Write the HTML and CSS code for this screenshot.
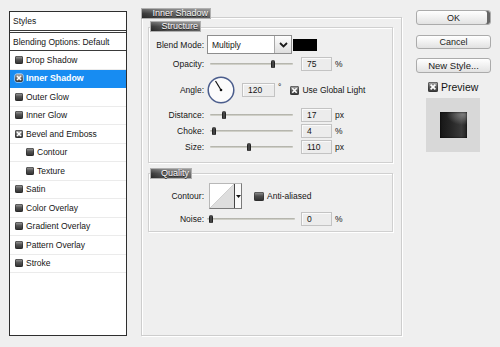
FILE: index.html
```html
<!DOCTYPE html>
<html>
<head>
<meta charset="utf-8">
<title>Layer Style</title>
<link rel="stylesheet" href="styles.css">
</head>
<body>
<div class="dialog">
  <div class="styles-panel">
    <div class="sp-head">Styles</div>
    <div class="sp-blend">Blending Options: Default</div>
    <ul class="sp-list">
      <li><span class="ico"></span>Drop Shadow</li>
      <li class="sel"><span class="ico on"><svg width="8" height="8" viewBox="0 0 8 8"><path d="M2 2 L6 6 M6 2 L2 6" stroke="#fff" stroke-width="1.6"/></svg></span>Inner Shadow</li>
      <li><span class="ico"></span>Outer Glow</li>
      <li><span class="ico"></span>Inner Glow</li>
      <li><span class="ico on"><svg width="8" height="8" viewBox="0 0 8 8"><path d="M2 2 L6 6 M6 2 L2 6" stroke="#fff" stroke-width="1.6"/></svg></span>Bevel and Emboss</li>
      <li class="sub"><span class="ico"></span>Contour</li>
      <li class="sub"><span class="ico"></span>Texture</li>
      <li><span class="ico"></span>Satin</li>
      <li><span class="ico"></span>Color Overlay</li>
      <li><span class="ico"></span>Gradient Overlay</li>
      <li><span class="ico"></span>Pattern Overlay</li>
      <li><span class="ico"></span>Stroke</li>
    </ul>
  </div>

  <div class="main">
    <div class="tab tab-main">Inner Shadow</div>
    <div class="outer">
      <div class="tab tab-structure">Structure</div>
      <div class="group structure">
        <div class="row r-blend">
          <span class="lbl">Blend Mode:</span>
          <div class="select">Multiply<span class="dd"><svg width="9" height="6" viewBox="0 0 9 6"><path d="M1 1 L4.5 4.5 L8 1" fill="none" stroke="#1a1a1a" stroke-width="1.8"/></svg></span></div>
          <span class="swatch"></span>
        </div>
        <div class="row r-opacity">
          <span class="lbl">Opacity:</span>
          <div class="slider"><span class="thumb" style="left:61px"></span></div>
          <span class="num">75</span><span class="unit">%</span>
        </div>
        <div class="row r-angle">
          <span class="lbl">Angle:</span>
          <svg class="dial" width="28" height="28" viewBox="0 0 28 28">
            <circle cx="14" cy="14" r="12.8" fill="#fbfbfb" stroke="#4b5d8c" stroke-width="1.5"/>
            <line x1="14" y1="14" x2="8.5" y2="5" stroke="#111" stroke-width="1.2"/>
            <circle cx="14" cy="14" r="1.3" fill="#111"/>
          </svg>
          <span class="num num-angle">120</span><span class="deg">°</span>
          <span class="cb cb-gl"><svg width="9" height="9" viewBox="0 0 9 9"><path d="M2.3 2.3 L6.7 6.7 M6.7 2.3 L2.3 6.7" stroke="#fff" stroke-width="1.6"/></svg></span>
          <span class="cb-text">Use Global Light</span>
        </div>
        <div class="row r-dist">
          <span class="lbl">Distance:</span>
          <div class="slider"><span class="thumb" style="left:12px"></span></div>
          <span class="num">17</span><span class="unit">px</span>
        </div>
        <div class="row r-choke">
          <span class="lbl">Choke:</span>
          <div class="slider"><span class="thumb" style="left:2px"></span></div>
          <span class="num">4</span><span class="unit">%</span>
        </div>
        <div class="row r-size">
          <span class="lbl">Size:</span>
          <div class="slider"><span class="thumb" style="left:37px"></span></div>
          <span class="num">110</span><span class="unit">px</span>
        </div>
      </div>

      <div class="tab tab-quality">Quality</div>
      <div class="group quality">
        <div class="row r-contour">
          <span class="lbl">Contour:</span>
          <div class="contour">
            <svg class="curve" width="24" height="24" viewBox="0 0 24 24">
              <rect width="24" height="24" fill="#fff"/>
              <path d="M0 24 L24 0 L24 24 Z" fill="#dedede"/>
              <path d="M0 24 L24 0" stroke="#c8c8c8" stroke-width="0.8"/>
            </svg>
            <span class="contour-dd"><svg width="5" height="3" viewBox="0 0 5 3"><path d="M0 0 H5 L2.5 3 Z" fill="#111"/></svg></span>
          </div>
          <span class="cb cb-aa"></span>
          <span class="cb-text">Anti-aliased</span>
        </div>
        <div class="row r-noise">
          <span class="lbl">Noise:</span>
          <div class="slider slider-noise"><span class="thumb" style="left:2px"></span></div>
          <span class="num num-noise">0</span><span class="unit">%</span>
        </div>
      </div>
    </div>
  </div>

  <div class="side">
    <div class="btn ok">OK</div>
    <div class="btn cancel">Cancel</div>
    <div class="btn newstyle">New Style...</div>
    <div class="preview-row">
      <span class="cb cb-pv"><svg width="10" height="10" viewBox="0 0 10 10"><path d="M2.6 2.6 L7.4 7.4 M7.4 2.6 L2.6 7.4" stroke="#fff" stroke-width="1.7"/></svg></span>
      <span class="pv-text">Preview</span>
    </div>
    <div class="preview-box"><div class="preview-sq"></div></div>
  </div>
</div>
</body>
</html>
```

FILE: styles.css
```css
* {
  box-sizing: border-box;
  margin: 0;
  padding: 0;
}

html, body {
  width: 500px;
  height: 347px;
  overflow: hidden;
}

body {
  background: #efefef;
  font-family: "Liberation Sans", Arial, sans-serif;
  font-size: 8.5px;
  color: #151515;
}

.dialog {
  display: flex;
  align-items: flex-start;
}

/* ---------- Styles list ---------- */
.styles-panel {
  margin: 11px 0 0 9px;
  width: 118px;
  height: 325px;
  border: 1px solid #2e2e2e;
  background: #fff;
  display: flex;
  flex-direction: column;
}

.sp-head {
  height: 19px;
  border-bottom: 1px solid #3a3a3a;
  padding-left: 3px;
  display: flex;
  align-items: center;
}

.sp-blend {
  margin-top: 1px;
  height: 19px;
  border-top: 1px solid #3a3a3a;
  border-bottom: 1px solid #3a3a3a;
  padding-left: 3px;
  display: flex;
  align-items: center;
}

.sp-list {
  list-style: none;
}

.sp-list li {
  height: 18.5px;
  display: flex;
  align-items: center;
  padding-left: 5px;
  border-bottom: 1px solid #ebebeb;
}

.sp-list li.sub {
  padding-left: 16px;
}

.sp-list li.sel {
  background: #178cf2;
  border-bottom-color: #178cf2;
  color: #fff;
  font-weight: bold;
  font-size: 8.8px;
}

.ico {
  flex: none;
  width: 8px;
  height: 8px;
  margin-right: 3px;
  border-radius: 2px;
  background: linear-gradient(#a5a5a5, #555 45%, #2c2c2c);
  box-shadow: inset 0 0 0 0.5px #222;
  display: flex;
}

.ico.on {
  background: linear-gradient(#b0b0b0, #666 50%, #3a3a3a);
}

.sel .ico {
  box-shadow: 0 0 0 0.5px #e8f2ff;
}

/* ---------- Main settings ---------- */
.main {
  margin: 8px 0 0 14px;
  width: 261px;
  display: flex;
  flex-direction: column;
  align-items: flex-start;
}

.tab {
  position: relative;
  z-index: 1;
  color: #fafafa;
  font-size: 9px;
  line-height: 9px;
  text-align: right;
  padding-right: 2px;
  border: 1px solid #b0b0b0;
  background:
    linear-gradient(rgba(255, 255, 255, 0.3), rgba(255, 255, 255, 0.05) 50%, rgba(0, 0, 0, 0.15)),
    linear-gradient(to right, #2e2e2e, #575757 35%, #6e6e6e);
  text-shadow: 0 1px 0 #222;
}

.tab-main {
  width: 70px;
  height: 11px;
  margin-bottom: -2px;
}

.outer {
  width: 261px;
  height: 319px;
  border: 1px solid #cdcdcd;
  box-shadow: inset 1px 1px 0 #fff, 1px 1px 0 #fff;
  padding-left: 6px;
  display: flex;
  flex-direction: column;
  align-items: flex-start;
}

.tab-structure {
  width: 51px;
  height: 11px;
  margin: 3px 0 -5px 2px;
}

.tab-quality {
  width: 42px;
  height: 11px;
  margin: 5px 0 -6px 2px;
}

.group {
  width: 245px;
  border: 1px solid #d0d0d0;
  box-shadow: inset 1px 1px 0 #fff, 1px 1px 0 #fff;
}

.structure {
  height: 136px;
  padding-top: 7px;
}

.quality {
  height: 59px;
  padding-top: 9px;
}

.row {
  display: flex;
  align-items: center;
}

.lbl {
  flex: none;
  width: 55px;
  margin-right: 3px;
  text-align: right;
}

.r-blend { height: 19px; }
.r-opacity { height: 14px; margin-top: 3px; }
.r-angle { height: 28px; margin-top: 5px; }
.r-dist { height: 14px; margin-top: 4px; }
.r-choke { height: 14px; margin-top: 2px; }
.r-size { height: 14px; margin-top: 2px; }
.r-contour { height: 26px; }
.r-noise { height: 14px; margin-top: 3px; }

.select {
  width: 85px;
  height: 19px;
  border: 1px solid #8e8e8e;
  background: #fff;
  padding-left: 4px;
  display: flex;
  align-items: center;
}

.dd {
  margin-left: auto;
  width: 17px;
  height: 100%;
  border-left: 1px solid #a8a8a8;
  background: linear-gradient(#fdfdfd, #dedede);
  display: flex;
  align-items: center;
  justify-content: center;
}

.swatch {
  width: 24px;
  height: 12px;
  margin-left: 1px;
  background: #000;
}

.slider {
  position: relative;
  flex: none;
  width: 83px;
  height: 10px;
  margin-left: 3px;
}

.slider::before {
  content: "";
  position: absolute;
  left: 0;
  right: 0;
  top: 4px;
  height: 2px;
  border-radius: 1px;
  background: linear-gradient(#a9a9a1, #dcdcd4);
}

.slider-noise {
  width: 88px;
  margin-left: 0;
}

.thumb {
  position: absolute;
  top: 1px;
  width: 4px;
  height: 8px;
  border-radius: 2px 2px 1px 1px;
  background: linear-gradient(to right, #111, #555 50%, #111);
}

.num {
  flex: none;
  width: 31px;
  height: 14px;
  margin-left: 8px;
  padding-left: 5px;
  border: 1px solid #c3c3c3;
  background: #ececec;
  box-shadow: inset 1px 1px 0 #fafafa;
  display: flex;
  align-items: center;
}

.num-noise {
  margin-left: 6px;
}

.num-angle {
  width: 33px;
  margin-left: 7px;
}

.unit {
  margin-left: 3px;
}

.deg {
  margin-left: 3px;
  align-self: flex-start;
  margin-top: 6px;
}

.dial {
  flex: none;
}

.cb {
  flex: none;
  width: 9px;
  height: 9px;
  border-radius: 2px;
  background: linear-gradient(#b5b5b5, #5e5e5e 50%, #363636);
  box-shadow: inset 0 0 0 0.5px #2a2a2a;
  display: flex;
}

.cb-gl {
  margin-left: 9px;
}

.cb-aa {
  width: 10px;
  margin-left: 12px;
  background: linear-gradient(#9a9a9a, #4e4e4e 45%, #2c2c2c);
}

.cb-text {
  margin-left: 3px;
}

.contour {
  flex: none;
  margin-left: 2px;
  width: 33px;
  height: 26px;
  border: 1px solid #7a7a7a;
  border-left-color: #b8b8b8;
  border-top-color: #b8b8b8;
  display: flex;
  background: #fff;
}

.curve {
  display: block;
}

.contour-dd {
  flex: 1;
  border-left: 1px solid #444;
  display: flex;
  align-items: center;
  justify-content: center;
  background: #fafafa;
}

/* ---------- Right side ---------- */
.side {
  margin: 10px 0 0 14px;
  width: 75px;
  display: flex;
  flex-direction: column;
  align-items: flex-start;
}

.btn {
  width: 75px;
  height: 15px;
  border: 1px solid #ababab;
  border-radius: 3px;
  background: linear-gradient(#ffffff, #f1f1f1 50%, #e2e2e2);
  display: flex;
  align-items: center;
  justify-content: center;
  font-size: 9px;
  color: #222;
}

.ok {
  box-shadow: inset -3px 0 0 #666;
}

.cancel {
  margin-top: 10px;
  height: 14px;
}

.newstyle {
  margin-top: 9px;
  font-size: 9.5px;
}

.preview-row {
  margin: 9px 0 0 12px;
  display: flex;
  align-items: center;
  font-size: 10.5px;
  height: 10px;
}

.cb-pv {
  width: 10px;
  height: 10px;
}

.pv-text {
  margin-left: 3px;
}

.preview-box {
  margin: 6px 0 0 10px;
  width: 54px;
  height: 54px;
  background: #d8d8d8;
  display: flex;
  align-items: center;
  justify-content: center;
}

.preview-sq {
  width: 27px;
  height: 26px;
  background:
    radial-gradient(ellipse 60% 40% at 85% 10%, rgba(140, 140, 140, 0.8), rgba(0, 0, 0, 0) 100%),
    linear-gradient(to right, #161616, #262626 40%, #3a3a3a 80%, #222);
  box-shadow: inset 0 0 2px #000;
}
```
